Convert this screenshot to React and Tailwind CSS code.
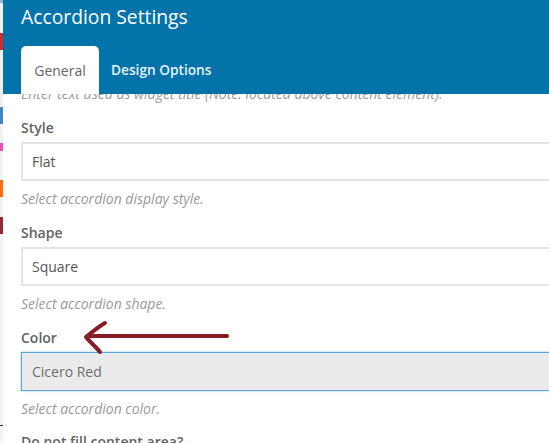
import React from 'react';

const fields = [
  { label: 'Style', value: 'Flat', hint: 'Select accordion display style.' },
  { label: 'Shape', value: 'Square', hint: 'Select accordion shape.' },
  { label: 'Color', value: 'Cicero Red', hint: 'Select accordion color.', active: true },
];

// slivers of the page behind the modal
const strip = [
  { h: 'h-[3px]', bg: 'bg-[#8fb4d6]' },
  { h: 'h-[30px]', bg: 'bg-[#eef1f4]' },
  { h: 'h-[17px]', bg: 'bg-[#c9302c]' },
  { h: 'h-[57px]', bg: 'bg-[#f0f0f0]' },
  { h: 'h-[17px]', bg: 'bg-[#3f86c4]' },
  { h: 'h-[19px]', bg: 'bg-[#f1f1f1]' },
  { h: 'h-[8px]', bg: 'bg-[#f050b0]' },
  { h: 'h-[29px]', bg: 'bg-[#f1f1f1]' },
  { h: 'h-[17px]', bg: 'bg-[#ff6a13]' },
  { h: 'h-[20px]', bg: 'bg-[#f1f1f1]' },
  { h: 'h-[17px]', bg: 'bg-[#8e2a35]' },
  { h: 'h-[191px]', bg: 'bg-[#f4f4f4]' },
  { h: 'h-[1px]', bg: 'bg-[#1d2b4f]' },
  { h: 'h-[17px]', bg: 'bg-[#f4f4f4]' },
];

function Field({ label, value, hint, active }) {
  return (
    <div className="h-[105px]">
      <div className="h-[26px] text-[14px] leading-[24px] font-semibold text-[#636363]">{label}</div>
      <div
        className={
          active
            ? 'w-[560px] h-[39px] pl-[10px] flex items-center text-[14px] border border-[#5aa5dc] bg-[#ebebeb] text-[#6b6b6b] shadow-[0_0_2px_#8cc4ec]'
            : 'w-[560px] h-[39px] pl-[9px] flex items-center text-[14px] border-2 border-[#e4e4e4] bg-white text-[#555]'
        }
      >
        {value}
      </div>
      <div className="mt-[8px] text-[14px] leading-[20px] italic text-[#9a9a9a] whitespace-nowrap">{hint}</div>
    </div>
  );
}

export default function App() {
  return (
    <div className="relative flex w-[549px] h-[443px] overflow-hidden bg-white font-['Open_Sans','Noto_Sans',sans-serif]">
      <div className="w-[3px] shrink-0 flex flex-col">
        {strip.map((s, i) => (
          <div key={i} className={`${s.h} ${s.bg}`} />
        ))}
      </div>

      <div className="flex-1 min-w-0 flex flex-col">
        <div className="h-[94px] shrink-0 bg-[#0473aa] pl-[18px] relative z-10 flex flex-col">
          <div className="h-[46px] pt-[1px] text-[19.3px] leading-[32px] text-white">Accordion Settings</div>
          <div className="flex items-stretch h-[48px]">
            <div className="w-[78px] bg-white rounded-t-[5px] flex items-center justify-center text-[14px] text-[#666]">
              General
            </div>
            <div className="ml-[12px] flex items-center text-[13.7px] font-semibold text-[#e6f2f8]">Design Options</div>
          </div>
        </div>

        <div className="flex-1 min-h-0 pl-[18px] overflow-hidden">
          <div className="-mt-[10px] h-[32px] text-[14px] leading-[20px] italic text-[#9a9a9a] whitespace-nowrap">
            Enter text used as widget title (Note: located above content element).
          </div>
          {fields.map((f) => (
            <Field key={f.label} {...f} />
          ))}
          <div className="h-[24px] -mt-[1px] text-[14px] leading-[24px] font-semibold text-[#636363]">Do not fill content area?</div>
        </div>
      </div>

      {/* hand-drawn arrow on top of the screenshot */}
      <svg className="absolute left-0 top-0 pointer-events-none" width="549" height="443" fill="none">
        <path
          d="M227 336 L120 336 L87 336 M105 323 C98 327 92 332 86 337 C90 342 96 347 100 352"
          stroke="#851d25"
          strokeWidth="4"
          strokeLinecap="round"
          strokeLinejoin="round"
        />
      </svg>
    </div>
  );
}
